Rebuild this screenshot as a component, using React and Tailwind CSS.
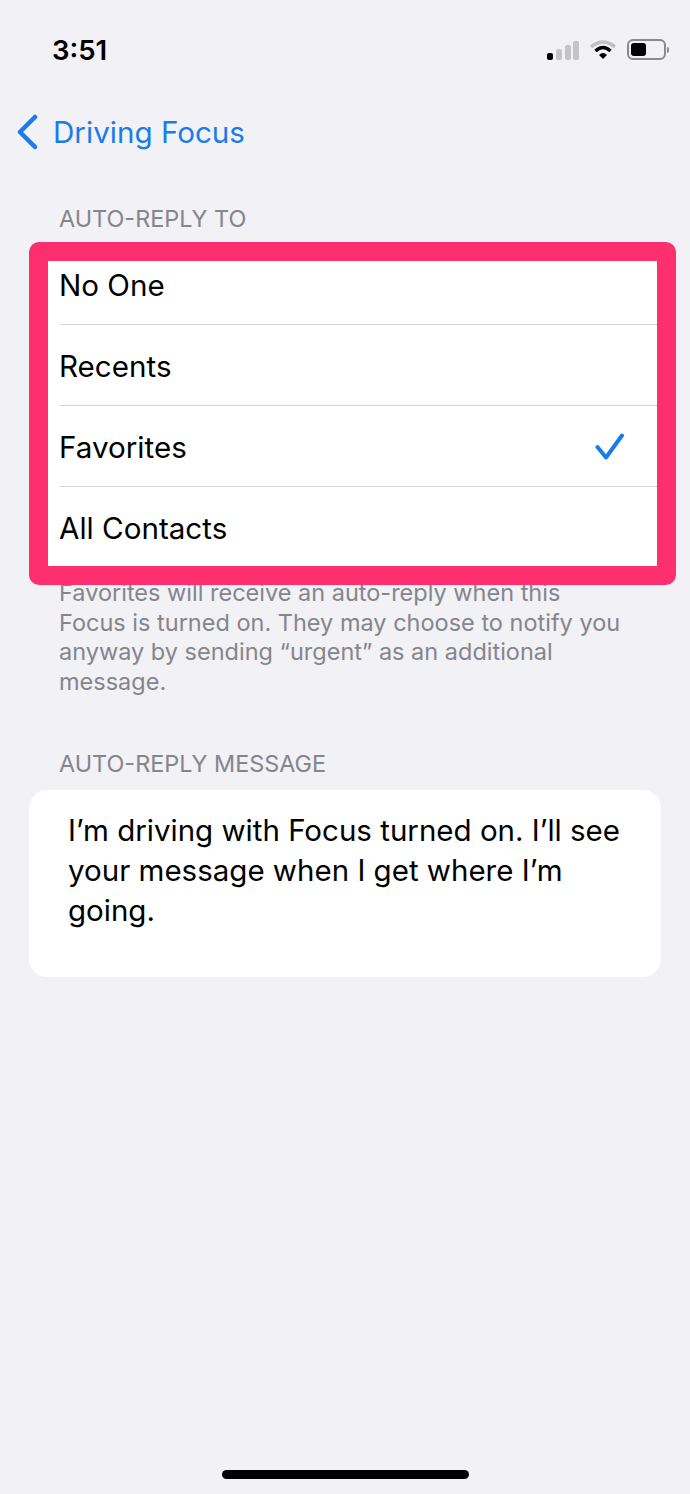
const rows = ["No One", "Recents", "Favorites", "All Contacts"];

function StatusIcons() {
  return (
    <div className="flex items-center gap-[11px]">
      <svg width="32" height="20" viewBox="0 0 32 20">
        <rect x="0" y="13" width="6" height="7" rx="2" fill="#000" />
        <rect x="9" y="9" width="6" height="11" rx="2" fill="#c4c4c8" />
        <rect x="18" y="5" width="6" height="15" rx="2" fill="#c4c4c8" />
        <rect x="26" y="1" width="6" height="19" rx="2" fill="#c4c4c8" />
      </svg>
      <svg width="26" height="20" viewBox="0 0 26 20">
        <path d="M1 7 Q13 -3 25 7" fill="none" stroke="#c0c0c4" strokeWidth="3.5" />
        <path d="M5.5 11 Q13 4 20.5 11" fill="none" stroke="#000" strokeWidth="3.5" />
        <path d="M9 15 Q13 11 17 15 L13 19 Z" fill="#000" />
      </svg>
      <div className="flex items-center gap-[1px]">
        <div className="w-[39px] h-[21px] rounded-[6px] border-2 border-[#8a8a8e] p-[2px]">
          <div className="w-[15px] h-full rounded-[3px] bg-black" />
        </div>
        <div className="w-[2px] h-[6px] rounded-r bg-[#8a8a8e]" />
      </div>
    </div>
  );
}

export default function App() {
  return (
    <div className="w-[690px] h-[1494px] flex flex-col bg-[#f1f1f6] font-['Inter','Liberation_Sans',sans-serif] text-black overflow-hidden">
      <div className="flex items-center justify-between pl-[52px] pr-[21px] pt-[31px] h-[68px]">
        <span className="text-[27.5px] leading-[34px] font-semibold">3:51</span>
        <StatusIcons />
      </div>

      <div className="flex items-center h-[44px] mt-[42px] pl-[16px] text-[#1a7cea]">
        <svg width="22" height="36" viewBox="0 0 22 36" className="shrink-0">
          <path d="M19 3 L4 18 L19 33" fill="none" stroke="currentColor" strokeWidth="4.5" strokeLinecap="round" strokeLinejoin="round" />
        </svg>
        <span className="ml-[15px] text-[29.6px] leading-[44px]">Driving Focus</span>
      </div>

      <div className="mt-[51px] pl-[59px] text-[23.4px] leading-[28px] text-[#85858b]">AUTO-REPLY TO</div>

      <div className="relative z-10 mt-[9px] ml-[29px] w-[647px] rounded-[10px] border-[19px] border-[#fe2f6e] bg-white">
        <div className="relative flex items-center h-[64px] pl-[11px] pb-[16px]">
          <span className="text-[29.6px] leading-[36px]">{rows[0]}</span>
          <div className="absolute bottom-0 left-[12px] right-0 h-px bg-[#d4d4d6]" />
        </div>
        <div className="relative flex items-center h-[81px] pl-[11px]">
          <span className="text-[29.6px] leading-[36px]">{rows[1]}</span>
          <div className="absolute bottom-0 left-[12px] right-0 h-px bg-[#d4d4d6]" />
        </div>
        <div className="relative flex items-center justify-between h-[81px] pl-[11px] pr-[32px]">
          <span className="text-[29.6px] leading-[36px]">{rows[2]}</span>
          <svg width="30" height="28" viewBox="0 0 30 28" className="text-[#1a7cea]">
            <path d="M2.5 14 L11 24.5 L27 2.5" fill="none" stroke="currentColor" strokeWidth="4" strokeLinecap="round" strokeLinejoin="round" />
          </svg>
          <div className="absolute bottom-0 left-[12px] right-0 h-px bg-[#d4d4d6]" />
        </div>
        <div className="flex items-center h-[79px] pl-[11px] pt-[3px]">
          <span className="text-[29.6px] leading-[36px]">{rows[3]}</span>
        </div>
      </div>

      <p className="-mt-[7px] pl-[59px] pr-[60px] text-[23.5px] leading-[29.5px] text-[#85858b]">
        Favorites will receive an auto-reply when this Focus is turned on. They may choose to notify you anyway by sending “urgent” as an additional message.
      </p>

      <div className="mt-[54px] pl-[59px] text-[23.4px] leading-[28px] text-[#85858b]">AUTO-REPLY MESSAGE</div>

      <div className="mt-[12px] mx-[29px] h-[187px] rounded-[18px] bg-white pl-[39px] pr-[30px] pt-[20px] text-[29.5px] leading-[40px]">
        I’m driving with Focus turned on. I’ll see your message when I get where I’m going.
      </div>

      <div className="mt-auto mb-[15px] mx-auto w-[247px] h-[9px] rounded-full bg-black" />
    </div>
  );
}
